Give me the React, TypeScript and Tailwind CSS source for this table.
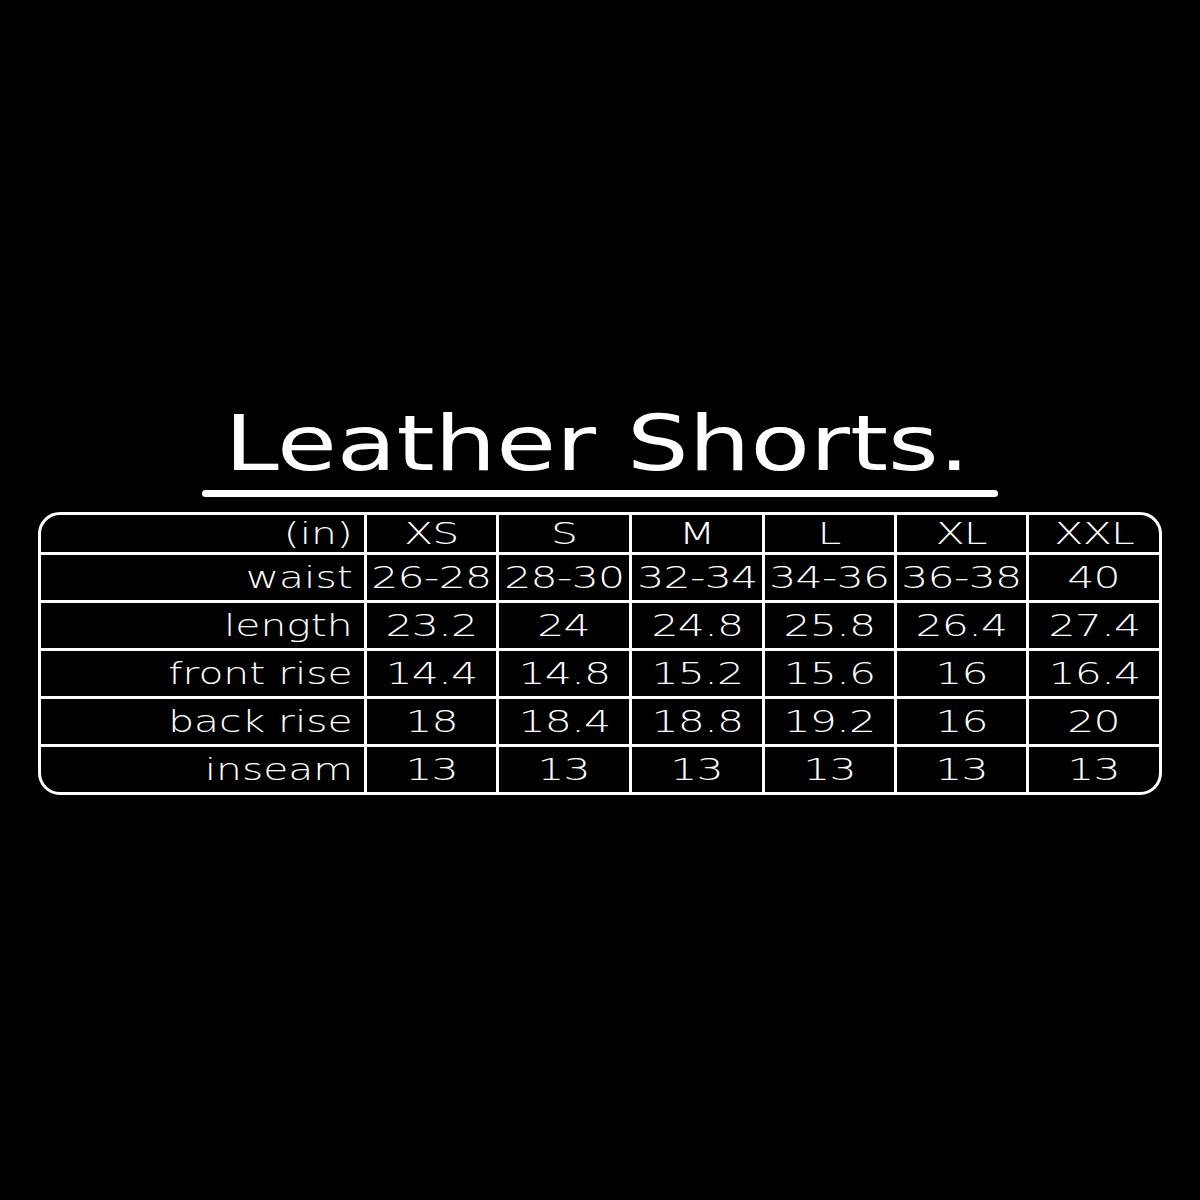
const sizes = ['XS', 'S', 'M', 'L', 'XL', 'XXL']

const rows: { label: string; values: string[] }[] = [
  { label: 'waist', values: ['26-28', '28-30', '32-34', '34-36', '36-38', '40'] },
  { label: 'length', values: ['23.2', '24', '24.8', '25.8', '26.4', '27.4'] },
  { label: 'front rise', values: ['14.4', '14.8', '15.2', '15.6', '16', '16.4'] },
  { label: 'back rise', values: ['18', '18.4', '18.8', '19.2', '16', '20'] },
  { label: 'inseam', values: ['13', '13', '13', '13', '13', '13'] },
]

function LabelCell({ text, first }: { text: string; first?: boolean }) {
  return (
    <div
      className={`flex items-center justify-end pr-[11px] ${
        first ? 'h-[37px]' : 'h-[48px] border-t-[3px] border-white'
      }`}
    >
      <span className="inline-block origin-right scale-x-[1.36] whitespace-nowrap">{text}</span>
    </div>
  )
}

function ValueCell({ text, first }: { text: string; first?: boolean }) {
  return (
    <div
      className={`flex items-center justify-center border-l-[3px] border-white ${
        first ? 'h-[37px]' : 'h-[48px] border-t-[3px]'
      }`}
    >
      <span className="inline-block origin-center scale-x-[1.42] whitespace-nowrap tracking-[-0.5px]">{text}</span>
    </div>
  )
}

export default function App() {
  return (
    <div className="w-[1200px] h-[1200px] bg-black text-white font-['DejaVu_Sans',sans-serif] flex flex-col items-center pt-[406px]">
      {/* title */}
      <h1 className="text-[76px] leading-none -ml-[5px]">
        <span className="inline-block origin-center scale-x-[1.28] whitespace-nowrap">Leather Shorts.</span>
      </h1>
      <div className="mt-[8px] h-[7px] w-[796px] rounded-full bg-white" />

      {/* size table */}
      <div className="mt-[15px] w-[1124px] rounded-[22px] border-[3px] border-white overflow-hidden text-[30px] leading-none font-extralight">
        <div className="grid grid-cols-[323px_132px_133px_133px_132px_132px_133px]">
          <LabelCell text="(in)" first />
          {sizes.map((s) => (
            <ValueCell key={s} text={s} first />
          ))}
          {rows.map((r) => (
            <div key={r.label} className="contents">
              <LabelCell text={r.label} />
              {r.values.map((v, i) => (
                <ValueCell key={i} text={v} />
              ))}
            </div>
          ))}
        </div>
      </div>
    </div>
  )
}
